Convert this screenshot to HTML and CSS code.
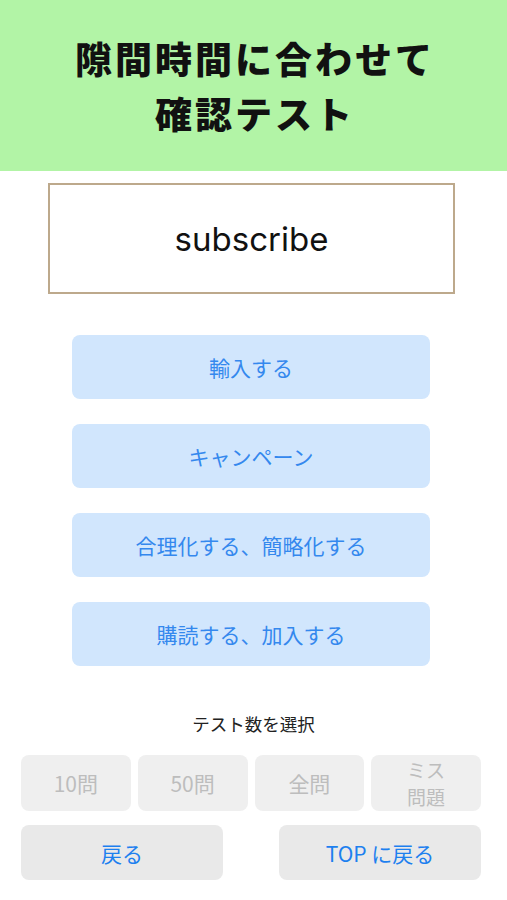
FILE: index.html
```html
<!DOCTYPE html>
<html lang="ja">
<head>
  <meta charset="UTF-8">
  <meta name="viewport" content="width=device-width, initial-scale=1.0">
  <title>隙間時間に合わせて確認テスト</title>
  <link rel="stylesheet" href="styles.css">
</head>
<body>
  <header class="title-bar">
    <h1>隙間時間に合わせて<br>確認テスト</h1>
  </header>

  <main class="quiz">
    <div class="word-box">subscribe</div>

    <div class="choices">
      <button class="choice">輸入する</button>
      <button class="choice">キャンペーン</button>
      <button class="choice">合理化する、簡略化する</button>
      <button class="choice">購読する、加入する</button>
    </div>

    <p class="count-label">テスト数を選択</p>
    <div class="counts">
      <button class="count">10問</button>
      <button class="count">50問</button>
      <button class="count">全問</button>
      <button class="count count-two">ミス<br>問題</button>
    </div>

    <div class="nav">
      <button class="nav-btn">戻る</button>
      <button class="nav-btn">TOP に戻る</button>
    </div>
  </main>
</body>
</html>
```

FILE: styles.css
```css
body {
  margin: 0;
  font-family: "Noto Sans CJK JP", "Noto Sans", sans-serif;
  background: #fff;
}
button {
  font-family: inherit;
  border: none;
  cursor: pointer;
}
.title-bar {
  background: #b2f4a6;
  height: 171px;
  display: flex;
  align-items: center;
  justify-content: center;
}
.title-bar h1 {
  margin: 0 0 0 3px;
  font-size: 37px;
  line-height: 55px;
  font-weight: 900;
  text-align: center;
  color: #111;
  letter-spacing: 3px;
}
.quiz {
  padding: 12px 0 0;
}
.word-box {
  margin: 0 52px 0 48px;
  height: 107px;
  border: 2px solid #bda98c;
  display: flex;
  align-items: center;
  justify-content: center;
  font-family: Inter, "Noto Sans", sans-serif;
  font-size: 33px;
  color: #111;
}
.choices {
  margin: 41px 77px 0 72px;
  display: flex;
  flex-direction: column;
  gap: 25px;
}
.choice {
  height: 64px;
  border-radius: 8px;
  background: #d1e6fd;
  color: #3488ee;
  font-size: 21px;
}
.count-label {
  margin: 45px 0 0;
  text-align: center;
  font-size: 17.5px;
  line-height: 26px;
  color: #222;
}
.counts {
  margin: 18px 26px 0 21px;
  display: grid;
  grid-template-columns: repeat(4, 1fr);
  gap: 7px;
}
.count {
  height: 56px;
  border-radius: 8px;
  background: #efefef;
  color: #bdbdbd;
  font-size: 21px;
  line-height: 26px;
  padding: 0;
}
.count-two {
  font-size: 19px;
  line-height: 27px;
}
.nav {
  margin: 14px 26px 0 21px;
  display: flex;
  justify-content: space-between;
}
.nav-btn {
  width: 202px;
  height: 55px;
  border-radius: 8px;
  background: #e9e9e9;
  color: #1d80ef;
  font-size: 21px;
}
```
